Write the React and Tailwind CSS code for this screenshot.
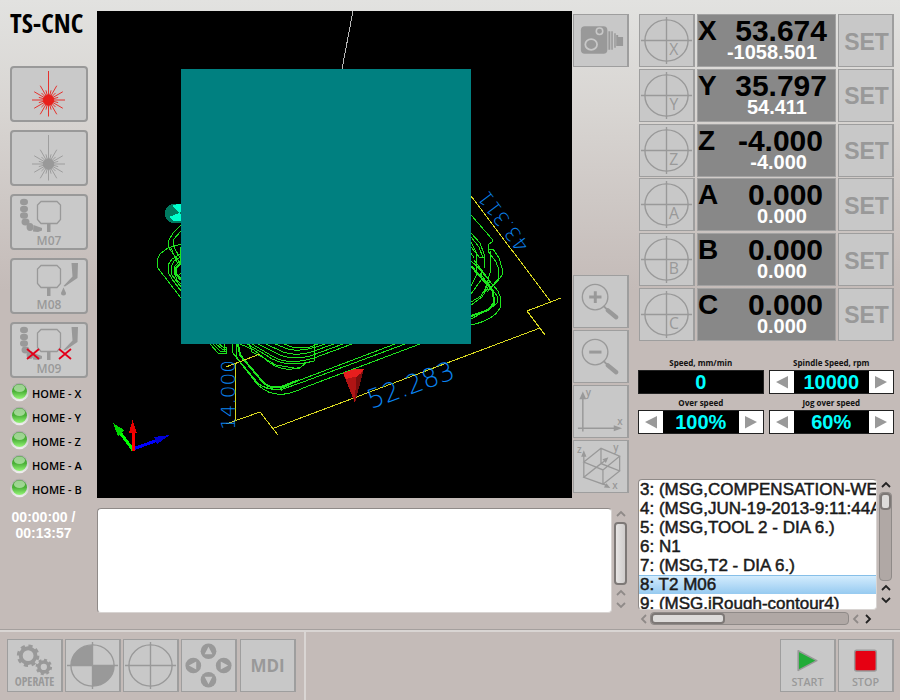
import { useState } from "react";

const axes = [
  { name: "X", pos: "53.674", machine: "-1058.501", posPad: "pr-2", machinePad: "pr-[18px]" },
  { name: "Y", pos: "35.797", machine: "54.411", posPad: "pr-2", machinePad: "pr-7" },
  { name: "Z", pos: "-4.000", machine: "-4.000", posPad: "pr-3", machinePad: "pr-7" },
  { name: "A", pos: "0.000", machine: "0.000", posPad: "pr-3", machinePad: "pr-7" },
  { name: "B", pos: "0.000", machine: "0.000", posPad: "pr-3", machinePad: "pr-7" },
  { name: "C", pos: "0.000", machine: "0.000", posPad: "pr-3", machinePad: "pr-7" },
];

const program = [
  { n: 3, code: "(MSG,COMPENSATION-WEAR)" },
  { n: 4, code: "(MSG,JUN-19-2013-9:11:44AM)" },
  { n: 5, code: "(MSG,TOOL 2 - DIA 6.)" },
  { n: 6, code: "N1" },
  { n: 7, code: "(MSG,T2 - DIA 6.)" },
  { n: 8, code: "T2 M06" },
  { n: 9, code: "(MSG,iRough-contour4)" },
];

const homes = ["X", "Y", "Z", "A", "B"];

function ToolButton({ label, children }) {
  return (
    <button
      aria-label={label}
      className="h-[53px] w-14 shrink-0 border border-r-2 border-[#9e9e9e] bg-[#c8c8c8]"
    >
      {children}
    </button>
  );
}

function SideButton({ label, children }) {
  return (
    <button
      aria-label={label}
      className="h-14 w-[78px] rounded border-2 border-[#999] bg-[#c9c9c9]"
    >
      <svg viewBox="0 0 74 52" className="block h-full w-full">
        {children}
      </svg>
    </button>
  );
}

function Laser({ color }) {
  const rays = [];
  for (let i = 0; i < 24; i++) {
    const a = (i * Math.PI) / 12;
    const len = i === 18 ? 29 : i % 2 ? 10 : 16.5;
    rays.push(
      <line key={i} x1="36.5" y1="32" x2={36.5 + Math.cos(a) * len} y2={32 + Math.sin(a) * len} />
    );
  }
  return (
    <g stroke={color} strokeWidth="0.9">
      {rays}
      <circle cx="36.5" cy="32" r="5.2" fill={color} />
    </g>
  );
}

function Spindle({ text }) {
  return (
    <g>
      <path
        d="M29 5.5H45L48.5 9V23.5L45 27.5H29L25.5 23.5V9Z"
        fill="none"
        stroke="#999"
        strokeWidth="1.3"
      />
      <path d="M35 27.5H38.5V36H35Z" fill="#999" />
      <text
        x="37"
        y="49"
        textAnchor="middle"
        className="fill-[#999] font-['Open_Sans',sans-serif] text-[12px] font-semibold"
      >
        {text}
      </text>
    </g>
  );
}

function Hose() {
  return (
    <g fill="#999">
      <ellipse cx="12" cy="6" rx="4" ry="3.2" />
      <ellipse cx="12" cy="13" rx="4" ry="3.2" />
      <ellipse cx="12" cy="19.5" rx="4" ry="3.2" />
      <ellipse cx="13.5" cy="26" rx="4" ry="3.4" />
      <ellipse cx="18" cy="31" rx="3.4" ry="4" />
      <path d="M21.5 29L30 32V34.5L26 36L21 35.5Z" />
    </g>
  );
}

function Nozzle() {
  return <path d="M59.5 3H66L65.5 18L53 26.5L51.5 26L60.5 16.5Z" fill="#999" />;
}

function Cross({ x }) {
  return (
    <path
      d={`M${x - 6} 25L${x + 6} 35M${x - 6} 35L${x + 6} 25`}
      stroke="#e2001a"
      strokeWidth="1.8"
    />
  );
}

function Target({ letter, filled }) {
  return (
    <svg viewBox="0 0 54 51" className="block h-full w-full">
      {filled && <path d="M27 25.5H5A22 21 0 0 1 27 4.5ZM27 25.5H49A22 21 0 0 1 27 46.5Z" fill="#999" />}
      <g fill="none" stroke="#999" strokeWidth="1.4">
        <ellipse cx="27" cy="25.5" rx="22" ry="21" />
        <path d="M1 25.5H53M27 1.5V49.5" />
      </g>
      {letter && (
        <text
          x="34.5"
          y="40"
          textAnchor="middle"
          className="fill-[#999] font-['Open_Sans',sans-serif] text-[16px]"
        >
          {letter}
        </text>
      )}
    </svg>
  );
}

function Camera() {
  return (
    <svg viewBox="0 0 54 51" className="block h-full w-full">
      <rect x="7" y="11" width="27" height="28" rx="4" fill="#999" />
      <ellipse cx="17.5" cy="29.5" rx="6" ry="5.5" fill="none" stroke="#c8c8c8" strokeWidth="1.8" />
      <circle cx="26" cy="16" r="3.3" fill="none" stroke="#c8c8c8" strokeWidth="1.6" />
      <path d="M35 16H37V35H35ZM38 16H39.5V35H38ZM41 18H42.5V33H41ZM43 20H45V31H43ZM45 22H50V31H45Z" fill="#999" />
    </svg>
  );
}

function Zoom({ plus }) {
  return (
    <svg viewBox="0 0 54 51" className="block h-full w-full">
      <circle cx="21.5" cy="21" r="13" fill="none" stroke="#999" strokeWidth="1.4" />
      <path d={plus ? "M15.5 21H28M21.7 15V27" : "M15.5 21H28"} stroke="#999" strokeWidth="3" />
      <path d="M30 30L34 34" stroke="#999" strokeWidth="2" />
      <path d="M34.5 34.5L43 41.5" stroke="#999" strokeWidth="4.5" strokeLinecap="round" />
    </svg>
  );
}

function FlatView() {
  return (
    <svg viewBox="0 0 54 51" className="block h-full w-full">
      <path d="M9 10V46M4 42.5H44" stroke="#999" strokeWidth="1.5" />
      <path d="M9 5L12.5 13H5.5ZM49 42.5L40.5 39.5V45.5Z" fill="#999" />
      <text x="12" y="10" className="fill-[#999] font-['Open_Sans',sans-serif] text-[10px] font-semibold">y</text>
      <text x="44" y="39" className="fill-[#999] font-['Open_Sans',sans-serif] text-[10px] font-semibold">x</text>
    </svg>
  );
}

function CubeView() {
  return (
    <svg viewBox="0 0 54 51" className="block h-full w-full">
      <g fill="none" stroke="#999" strokeWidth="1.3">
        <path d="M10 21L27.5 7L46.5 15L29.5 29ZM10 36.5L27.5 22.5L46.5 30L29.5 43.5ZM27.5 7V22.5M46.5 15V30M29.5 29V43.5M10 14V36.5M10 36.5L31 20M29.5 43.5L34 45" />
      </g>
      <path d="M10 9L12.7 15.5H7.3ZM35 16L32.5 22L29 18ZM37 47.5L30.5 47L33 42.5Z" fill="#999" />
      <text x="3" y="12" className="fill-[#999] font-['Open_Sans',sans-serif] text-[10px] font-semibold">z</text>
      <text x="40" y="10" className="fill-[#999] font-['Open_Sans',sans-serif] text-[10px] font-semibold">y</text>
      <text x="39" y="48" className="fill-[#999] font-['Open_Sans',sans-serif] text-[10px] font-semibold">x</text>
    </svg>
  );
}

function Operate() {
  return (
    <svg viewBox="0 0 54 51" className="block h-full w-full">
      <g fill="none" stroke="#999">
        <circle cx="20.5" cy="15.5" r="7.5" strokeWidth="4" />
        <circle cx="20.5" cy="15.5" r="10" strokeWidth="3" strokeDasharray="4.2 3.654" />
        <circle cx="36.5" cy="27" r="5" strokeWidth="3.6" />
        <circle cx="36.5" cy="27" r="7.2" strokeWidth="2.4" strokeDasharray="3 2.655" />
      </g>
      <text
        x="27"
        y="46"
        textAnchor="middle"
        className="fill-[#999] font-['Open_Sans_Condensed','Noto_Sans_Condensed','Open_Sans',sans-serif] text-[12px] font-semibold"
      >
        OPERATE
      </text>
    </svg>
  );
}

function JogPad() {
  return (
    <svg viewBox="0 0 54 51" className="block h-full w-full">
      <g fill="#999">
        <circle cx="27" cy="11" r="8" />
        <circle cx="11.5" cy="25.5" r="8" />
        <circle cx="42.5" cy="25.5" r="8" />
        <circle cx="27" cy="40" r="8" />
      </g>
      <path
        d="M27 6.5L31 14H23ZM7 25.5L14.5 21.5V29.5ZM47 25.5L39.5 21.5V29.5ZM27 44.5L31 37H23Z"
        fill="#c8c8c8"
      />
    </svg>
  );
}

function Led() {
  return (
    <svg viewBox="0 0 20 20" className="h-5 w-5 shrink-0">
      <defs>
        <linearGradient id="rim" x1="0" y1="0" x2="0" y2="1">
          <stop offset="0" stopColor="#a9a6a6" />
          <stop offset="1" stopColor="#f2f2f2" />
        </linearGradient>
        <linearGradient id="glass" x1="0" y1="0" x2="0" y2="1">
          <stop offset="0" stopColor="#3f9a30" />
          <stop offset="0.5" stopColor="#4bb238" />
          <stop offset="1" stopColor="#96f578" />
        </linearGradient>
      </defs>
      <circle cx="9.5" cy="10" r="9.3" fill="url(#rim)" />
      <circle cx="9.5" cy="9.5" r="7.5" fill="url(#glass)" />
      <ellipse cx="9.5" cy="6.3" rx="5.5" ry="3.8" fill="#d8f3d0" opacity="0.6" />
    </svg>
  );
}

function Chevron({ dir, dark, label }) {
  const paths = {
    up: "M2 8L6 4L10 8",
    down: "M2 4L6 8L10 4",
    left: "M8 2L4 6L8 10",
    right: "M4 2L8 6L4 10",
  };
  return (
    <button aria-label={label} className="h-3 w-3 shrink-0">
      <svg viewBox="0 0 12 12" className="block h-full w-full">
        <path d={paths[dir]} fill="none" stroke={dark ? "#222" : "#8f8a88"} strokeWidth="1.8" />
      </svg>
    </button>
  );
}

function Stepper({ id, label, value, onStep }) {
  return (
    <div className="flex flex-1 flex-col">
      <label
        htmlFor={id}
        className="h-[13px] text-center font-['Open_Sans',sans-serif] text-[8px] leading-[11px] font-bold text-[#111]"
      >
        {label}
      </label>
      <div className="flex h-6 border border-[#222] bg-black">
        {onStep && (
          <button aria-label={`${label} down`} onClick={() => onStep(-1)} className="w-6 bg-white">
            <svg viewBox="0 0 24 22" className="block h-full w-full">
              <path d="M6 11L18 5V17.5Z" fill="#999" />
            </svg>
          </button>
        )}
        <output
          id={id}
          className="flex-1 text-center font-['Liberation_Sans',sans-serif] text-[20px] leading-[23px] font-bold text-[#00ffff]"
        >
          {value}
        </output>
        {onStep && (
          <button aria-label={`${label} up`} onClick={() => onStep(1)} className="w-6 bg-white">
            <svg viewBox="0 0 24 22" className="block h-full w-full">
              <path d="M18 11L6 5V17.5Z" fill="#999" />
            </svg>
          </button>
        )}
      </div>
    </div>
  );
}

function Scene() {
  return (
    <svg viewBox="97 11 475 487" className="block min-h-0 min-w-0 flex-1 bg-black" shapeRendering="crispEdges">
      <path d="M353 11L342 69" stroke="#b8b8b8" />

      {/* start point marker */}
      <rect x="165" y="204" width="30" height="19" rx="9" fill="#007a60" />
      <path d="M179 213L172 206L177 204H190ZM179 213L169 217L173 221L190 222Z" fill="#00ffcc" />

      {/* tool path */}
      <g fill="none" stroke="#1ee61e">
        <path d="M181 244L168 248L160 254L157 260V267L181 298" />
        <path d="M181 225L173 233L168 242V247L181 264" />
        <path d="M181 231L174 239L173 245L181 260" />
        <path d="M181 254L172 259L168 265V272L172 279L181 291" />
        <path d="M181 257L174 261L171 267L172 275L181 287" />
        <path d="M181 260L175 266L174 272L177 280L181 284" />
        <path d="M181 263L176 268V274L181 280" strokeWidth="2" />
        <path d="M171 248L177 262L181 264M180 247V262M181 273L178 276L181 278" />

        <path d="M210 344L218 353H226M213 344L220 351H226M216 344L222 349H226M219 344L223 347H226V354M224 344V351" />
        <path d="M232 344V352L257 382Q265 391 280 389L300 380L395 344" />
        <path d="M238 344L240 355L262 381Q268 389 281 387L299 380" strokeWidth="2" />
        <path d="M236 344V356L256 383Q266 389 281 390V387" />
        <path d="M235 356L258 385Q276 402 303 388L420 344" />
        <path d="M280 390L303 382L405 344" />
        <path d="M240 344L254 350L270 363Q285 373 301 367L307 362" />
        <path d="M247 344L266 355Q284 369 314 361V344" />
        <path d="M252 344L272 356Q288 366 314 358L352 344" />
        <path d="M258 344L276 353Q290 361 310 356L343 344" />
        <path d="M266 344L283 352Q296 357 314 351L334 344" />
        <path d="M275 344L288 349Q301 353 325 344" />
        <path d="M284 344L292 347H310L318 344" />
        <path d="M249 344L252 352L262 357L276 365L300 369" />

        <path d="M471 215L492 239V242L488 245V251L496 262L499 270L498 279L489 290" />
        <path d="M488 250L493 249L499 258L502 268V275L497 282L487 292" />
        <path d="M490 251V273L485 290" />
        <path d="M471 233L480 243L484 254V268" />
        <path d="M471 237L479 247L483 258M471 242L476 252L477 274L471 286" />
        <path d="M471 247L480 258L484 257M471 253L474 258" />
        <path d="M471 261L481 270V280L471 294" />
        <path d="M471 266L493 291L494 303L488 310L471 316" strokeWidth="2" />
        <path d="M476 265L498 291L501 299L500 308Q494 320 471 325" />
        <path d="M480 273L497 296V303L491 308L471 319" />
        <path d="M474 260L490 281L481 296L471 302" />
        <path d="M490 284L482 297L471 305M489 289L484 292" />
      </g>

      {/* stock top */}
      <rect x="181" y="69" width="290" height="275" fill="#008080" />

      {/* dimensions */}
      <g fill="none" stroke="#d8d820">
        <path d="M471 196L551 302M561 298L527 311L545 335M540 328L274 428M278 435L260 412L226 424M235 363V421M226 367L260 354" />
      </g>
      <g className="fill-[#0a84f0] font-['DejaVu_Sans',sans-serif] font-extralight">
        <text transform="translate(371 409) rotate(-20)" className="text-[26px]">52.283</text>
        <text transform="translate(235 430) rotate(-90)" className="text-[20px]">14.000</text>
        <text transform="translate(530 245) rotate(-127)" className="text-[20px]">43.311</text>
      </g>

      {/* tool */}
      <path d="M343 373L354 369H364L362 375L355 403Z" fill="#b01414" />
      <path d="M343 373L354 369H364L359 376L346 379Z" fill="#e61e1e" />
      <path d="M356 377L363 372L355 403Z" fill="#7c0e0e" />

      {/* orientation triad */}
      <path d="M133 450L119 431" stroke="#00ff00" strokeWidth="3" />
      <path d="M113 423L124 430L118 436Z" fill="#00d800" />
      <path d="M133 449L158 440" stroke="#0000ff" strokeWidth="3" />
      <path d="M170 435L154 437L157 444Z" fill="#0000d8" />
      <path d="M133 451V430" stroke="#ff0000" strokeWidth="3" />
      <path d="M132.5 420L137 433H129Z" fill="#e80000" />
    </svg>
  );
}

export default function App() {
  const [spindle, setSpindle] = useState(10000);
  const [over, setOver] = useState(100);
  const [jog, setJog] = useState(60);
  const [current, setCurrent] = useState(8);

  return (
    <div className="flex min-h-screen flex-col bg-[#c4bbb8] bg-[linear-gradient(to_bottom,#e2e2e0_0px,#d8d5d2_110px,#c4bbb8_290px)] font-['Open_Sans',sans-serif]">
      <main className="flex flex-1 pt-[11px] pr-1.5">
        <aside className="flex w-[97px] shrink-0 flex-col pl-2.5">
          <h1 className="h-[55px] font-['Open_Sans_Condensed','Noto_Sans_Condensed','Open_Sans',sans-serif] text-[27px] leading-6 font-bold whitespace-nowrap text-black">
            TS-CNC
          </h1>
          <div className="flex flex-col gap-2">
            <SideButton label="Laser on">
              <Laser color="#e8201c" />
            </SideButton>
            <SideButton label="Laser off">
              <Laser color="#999" />
            </SideButton>
            <SideButton label="M07">
              <Hose />
              <Spindle text="M07" />
            </SideButton>
            <SideButton label="M08">
              <Spindle text="M08" />
              <Nozzle />
              <path d="M51.5 27.5L54 33A2.5 2.5 0 0 1 49 33Z" fill="#999" />
            </SideButton>
            <SideButton label="M09">
              <Hose />
              <Spindle text="M09" />
              <Nozzle />
              <Cross x={21} />
              <Cross x={53} />
            </SideButton>
          </div>
          <ul className="mt-1">
            {homes.map((h) => (
              <li key={h} className="flex h-6 items-start gap-0.5">
                <Led />
                <span className="pt-1.5 text-[11px] leading-3 font-semibold whitespace-nowrap text-black">
                  HOME - {h}
                </span>
              </li>
            ))}
          </ul>
          <p className="mt-[7px] w-[67px] text-center font-['Liberation_Sans',sans-serif] text-[14px] leading-4 font-bold text-white">
            00:00:00 / 00:13:57
          </p>
        </aside>

        <section className="flex min-w-0 flex-1 flex-col">
          <div className="flex min-h-0 flex-1">
            <Scene />
            <div className="flex flex-col gap-0.5 pt-[3px] pb-[5px] pl-px">
              <ToolButton label="Camera">
                <Camera />
              </ToolButton>
              <div className="flex-1" />
              <ToolButton label="Zoom in">
                <Zoom plus />
              </ToolButton>
              <ToolButton label="Zoom out">
                <Zoom />
              </ToolButton>
              <ToolButton label="Top view">
                <FlatView />
              </ToolButton>
              <ToolButton label="3D view">
                <CubeView />
              </ToolButton>
            </div>
          </div>
          <div className="mt-2.5 mb-4 flex h-[105px]">
            <textarea
              aria-label="Messages"
              className="min-w-0 flex-1 resize-none rounded-sm border border-[#8f8a88] border-r-[#d8d4d2] border-b-[#d8d4d2] bg-white p-1 text-sm"
            />
            <div className="flex w-[17px] flex-col items-center pb-0.5">
              <Chevron dir="up" label="Scroll messages up" />
              <div className="my-0.5 w-[13px] flex-1 rounded-sm border-2 border-[#7d7876] bg-linear-to-r from-[#e6e4e3] to-[#cfcccb]" />
              <Chevron dir="up" label="Previous message" />
              <Chevron dir="down" label="Next message" />
            </div>
          </div>
        </section>

        <section className="ml-[9px] flex w-[256px] shrink-0 flex-col pt-[3px]">
          <div className="flex h-[327px] flex-col justify-between pl-px">
            {axes.map((a) => (
              <div key={a.name} className="flex gap-0.5">
                <ToolButton label={`Zero ${a.name}`}>
                  <Target letter={a.name} />
                </ToolButton>
                <div className="flex h-[53px] flex-1 flex-col border border-[#a2a2a2] bg-[#888] text-right font-['Liberation_Sans',sans-serif] font-bold">
                  <div className={`flex justify-between text-[30px] leading-8 text-black ${a.posPad}`}>
                    <span className="text-[28px]">{a.name}</span>
                    <span>{a.pos}</span>
                  </div>
                  <div className={`text-[20px] leading-[10px] text-white ${a.machinePad}`}>{a.machine}</div>
                </div>
                <ToolButton label={`Set ${a.name}`}>
                  <span className="block pt-0.5 pl-0.5 font-['Liberation_Sans',sans-serif] text-[23px] leading-6 font-bold text-[#999]">
                    SET
                  </span>
                </ToolButton>
              </div>
            ))}
          </div>

          <div className="mt-4 flex gap-[5px]">
            <Stepper id="speed" label="Speed, mm/min" value="0" />
            <Stepper
              id="spindle"
              label="Spindle Speed, rpm"
              value={spindle}
              onStep={(d) => setSpindle(spindle + d * 100)}
            />
          </div>
          <div className="mt-[3px] flex gap-[5px]">
            <Stepper id="over" label="Over speed" value={`${over}%`} onStep={(d) => setOver(over + d * 10)} />
            <Stepper id="jog" label="Jog over speed" value={`${jog}%`} onStep={(d) => setJog(jog + d * 10)} />
          </div>

          <div className="mt-[45px] flex h-[131px]">
            <ul className="min-w-0 flex-1 overflow-hidden rounded-sm border border-[#8f8a88] border-r-[#d8d4d2] border-b-[#d8d4d2] bg-white font-['Liberation_Sans',sans-serif] text-[17px] leading-[18px] whitespace-pre text-[#1a1a1a] [-webkit-text-stroke:0.5px_#1a1a1a]">
              {program.map((line) => (
                <li
                  key={line.n}
                  onClick={() => setCurrent(line.n)}
                  className={
                    line.n === current
                      ? "h-[19px] border-t border-[#86bfe8] bg-linear-to-b from-[#d3ecfd] to-[#96caf0] pl-px"
                      : "h-[19px] pt-px pl-px"
                  }
                >
                  {line.n}: {line.code}
                </li>
              ))}
            </ul>
            <div className="flex w-[17px] flex-col items-center pb-1">
              <Chevron dir="up" dark label="Scroll program up" />
              <div className="my-px w-[13px] flex-1 rounded-sm border border-[#8f8a88] bg-[#b0a8a5]">
                <div className="h-[17px] rounded-sm border-2 border-[#7d7876] bg-[#dddbda]" />
              </div>
              <Chevron dir="up" dark label="Previous line" />
              <Chevron dir="down" dark label="Next line" />
            </div>
          </div>
          <div className="flex h-[17px] items-center pr-5">
            <Chevron dir="left" label="Scroll program left" />
            <div className="mr-px h-[13px] flex-1 rounded-sm border border-[#8f8a88] bg-[#b0a8a5]">
              <div className="h-full w-[74px] rounded-sm border-2 border-[#7d7876] bg-[#dddbda]" />
            </div>
            <Chevron dir="left" label="Page left" />
            <Chevron dir="right" dark label="Scroll program right" />
          </div>
        </section>
      </main>

      <footer className="flex h-[71px] shrink-0 border-t border-[#a5a09e]">
        <div className="flex w-[306px] gap-0.5 border-t-2 border-r-2 border-[#d9d5d3] pt-[7px] pl-[7px]">
          <ToolButton label="Operate">
            <Operate />
          </ToolButton>
          <ToolButton label="Zero all">
            <Target filled />
          </ToolButton>
          <ToolButton label="Go to zero">
            <Target />
          </ToolButton>
          <ToolButton label="Jog">
            <JogPad />
          </ToolButton>
          <div className="pl-px">
            <ToolButton label="MDI">
              <span className="text-[17px] leading-6 font-bold text-[#999]">MDI</span>
            </ToolButton>
          </div>
        </div>
        <div className="flex flex-1 justify-end gap-0.5 border-t-2 border-[#d9d5d3] pt-[7px] pr-1.5">
          <ToolButton label="Start">
            <svg viewBox="0 0 54 51" className="block h-full w-full">
              <path d="M17.5 10.5L36.5 20.5L17.5 30.5Z" fill="#22ac38" stroke="#999" strokeWidth="1.6" strokeLinejoin="round" />
              <text x="27" y="46" textAnchor="middle" className="fill-[#999] text-[11px] font-semibold">
                START
              </text>
            </svg>
          </ToolButton>
          <ToolButton label="Stop">
            <svg viewBox="0 0 54 51" className="block h-full w-full">
              <rect x="16" y="10" width="22" height="21" rx="2" fill="#e60012" stroke="#999" strokeWidth="1.5" />
              <text x="27" y="46" textAnchor="middle" className="fill-[#999] text-[11px] font-semibold">
                STOP
              </text>
            </svg>
          </ToolButton>
        </div>
      </footer>
    </div>
  );
}
